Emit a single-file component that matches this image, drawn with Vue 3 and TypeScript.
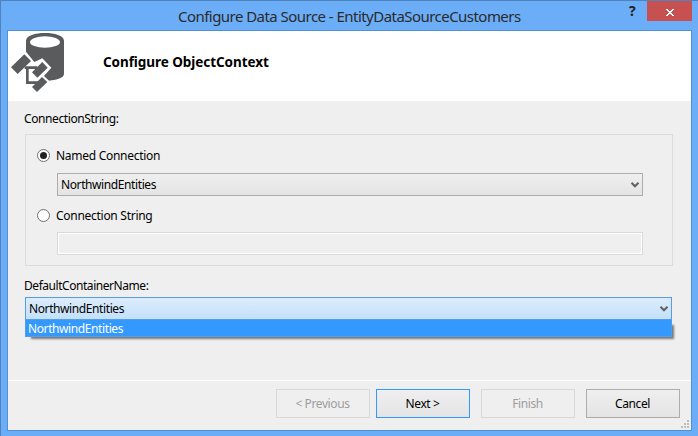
<script setup lang="ts">
import { ref } from 'vue'

interface WizardButton {
  label: string
  kind: 'disabled' | 'primary' | 'normal'
}

const connectionMode = ref<'named' | 'string'>('named')
const entity = 'NorthwindEntities'
const buttons: WizardButton[] = [
  { label: '< Previous', kind: 'disabled' },
  { label: 'Next >', kind: 'primary' },
  { label: 'Finish', kind: 'disabled' },
  { label: 'Cancel', kind: 'normal' },
]
const gripDots = [[6, 0], [3, 3], [6, 3], [0, 6], [3, 6], [6, 6]]
</script>

<template>
  <div class="window">
    <header class="titlebar">
      <h1 class="title">Configure Data Source - EntityDataSourceCustomers</h1>
      <span class="help">?</span>
      <button class="close" aria-label="Close">
        <svg width="8" height="7" viewBox="0 0 8 7" shape-rendering="crispEdges">
          <path d="M0 0h2v1h1v1h2v-1h1v-1h2v1h-1v1h-1v1h-1v1h1v1h1v1h1v1h-2v-1h-1v-1h-2v1h-1v1h-2v-1h1v-1h1v-1h1v-1h-1v-1h-1v-1h-1z" fill="#fff" />
        </svg>
      </button>
    </header>
    <main class="client">
      <section class="banner">
        <svg class="db-icon" width="56" height="62" viewBox="30 93 168 186">
          <path d="M78 122C78 91 192 91 192 122V222C192 249 78 249 78 222Z" fill="#595b5d" />
          <ellipse cx="135" cy="126" rx="45" ry="17.5" fill="#fff" />
          <path d="M70 155L76 153L103 186L127 175L154 203L132 228L151 246L111 288L60 255V225L40 190Z" fill="#fff" />
          <path d="M33 202L73 163L93 183L53 222Z" fill="#595b5d" />
          <path d="M74 203H112M82 203V248H116" fill="none" stroke="#595b5d" stroke-width="8" />
          <path d="M96 217L127 186L143 203L112 233Z" fill="#595b5d" />
          <path d="M96 261L126 231L142 246L111 276Z" fill="#595b5d" />
        </svg>
        <h2 class="heading">Configure ObjectContext</h2>
      </section>

      <section class="form">
        <div class="label cs-label">ConnectionString:</div>
        <div class="group">
          <div class="radio-row" @click="connectionMode = 'named'">
            <span class="radio"><i v-if="connectionMode === 'named'" /></span>
            <span class="option">Named Connection</span>
          </div>
          <div class="combo">
            <span class="entity">{{ entity }}</span>
            <svg class="arrow" width="8" height="6" viewBox="0 0 8 6"><path d="M.5 .8L4 4.3L7.5 .8" /></svg>
          </div>
          <div class="radio-row second" @click="connectionMode = 'string'">
            <span class="radio"><i v-if="connectionMode === 'string'" /></span>
            <span class="option">Connection String</span>
          </div>
          <div class="textbox" />
        </div>
        <div class="label dc-label">DefaultContainerName:</div>
        <div class="dropdown">
          <div class="combo open">
            <span class="entity">{{ entity }}</span>
            <svg class="arrow" width="8" height="6" viewBox="0 0 8 6"><path d="M.5 .8L4 4.3L7.5 .8" /></svg>
          </div>
          <div class="list"><span class="entity">{{ entity }}</span></div>
        </div>
      </section>

      <footer class="footer">
        <button v-for="b in buttons" :key="b.label" class="btn" :class="b.kind" :disabled="b.kind === 'disabled'">{{ b.label }}</button>
        <svg class="grip" width="8" height="8" viewBox="0 0 8 8">
          <rect v-for="[x, y] in gripDots" :key="`${x}-${y}`" :x="x" :y="y" width="2" height="2" fill="#bdbdbd" />
        </svg>
      </footer>
    </main>
  </div>
</template>

<style>
body { overflow: hidden; }
</style>

<style scoped>
* { box-sizing: border-box; }
.window {
  width: 698px;
  height: 436px;
  padding: 0 6px 5px;
  border: solid #4f83bd;
  border-width: 1px 0 0 1px;
  background: #6badf6;
  font: 12px/16px "Noto Sans", "Open Sans", sans-serif;
  letter-spacing: -0.4px;
  color: #000;
  white-space: nowrap;
}
.titlebar { display: flex; height: 29px; }
.title {
  width: 451px;
  margin: 4px 0 0 171px;
  font-size: 15px;
  line-height: 22px;
  font-weight: 400;
  letter-spacing: -0.54px;
  color: #2b2b2b;
}
.help {
  width: 18px;
  font: 700 14px/20px "Noto Sans", sans-serif;
  color: #222;
}
.close {
  display: flex;
  align-items: center;
  justify-content: center;
  width: 45px;
  height: 20px;
  padding: 2px 0 0 1px;
  border: 0;
  background: #c75050;
}
.client {
  display: flex;
  flex-direction: column;
  width: 685px;
  height: 401px;
  border: 1px solid #5090d5;
  background: #efefef;
}
.banner { display: flex; height: 70px; background: #fff; }
.db-icon { margin-left: 2px; }
.heading {
  margin: 22px 0 0 37px;
  font-size: 13.5px;
  line-height: 18px;
  font-weight: 700;
  letter-spacing: -0.06px;
}
.form { height: 279px; padding: 10px 18px 0 17px; }
.label { margin-left: -1px; }
.group {
  height: 132px;
  margin-top: 7px;
  padding: 14px 29px 0 11px;
  border: 1px solid #dcdcdc;
}
.radio-row { display: flex; align-items: center; gap: 6px; height: 13px; }
.option { letter-spacing: -0.28px; }
.radio {
  display: grid;
  place-items: center;
  width: 13px;
  height: 13px;
  border: 1px solid #707070;
  border-radius: 50%;
  background: #fff;
}
.radio i { width: 7px; height: 7px; border-radius: 50%; background: #222; }
.combo {
  display: flex;
  align-items: center;
  justify-content: space-between;
  height: 23px;
  padding: 0 3px;
  border: 1px solid #acacac;
  background: linear-gradient(#efefef, #e4e4e4);
}
.group .combo { margin: 11px 0 0 20px; }
.arrow { overflow: visible; }
.arrow path { fill: none; stroke: #606060; stroke-width: 2; }
.second { margin-top: 13px; }
.textbox {
  height: 23px;
  margin: 10px 0 0 20px;
  border: 1px solid #d9d9d9;
  box-shadow: inset 0 0 0 1px #fff;
}
.dc-label { margin-top: 12px; letter-spacing: -0.45px; }
.dropdown { width: 647px; margin-top: 3px; }
.open { border-color: #569de5; background: linear-gradient(#dcecfc, #c4e0fb); }
.list {
  height: 18px;
  margin-top: -1px;
  padding: 1px 0 0 2px;
  border: 1px solid #569de5;
  background: #3399ff;
  color: #fff;
  box-shadow: 4px 4px 2px -2px #777;
}
.footer {
  display: flex;
  position: relative;
  height: 50px;
  padding: 8px 0 0 268px;
  border-top: 1px solid #fff;
}
.btn {
  width: 94px;
  height: 29px;
  margin-right: 11px;
  padding: 0 1px 0 0;
  border: 1px solid #acacac;
  background: linear-gradient(#efefef, #e4e4e4);
  font: inherit;
  letter-spacing: inherit;
  color: #000;
}
.btn:first-child { margin-right: 6px; }
.btn.primary { border-color: #3399ff; }
.btn.disabled { border-color: #d9d9d9; background: #efefef; color: #9d9d9d; }
.grip { position: absolute; right: 2px; bottom: 2px; }
</style>
